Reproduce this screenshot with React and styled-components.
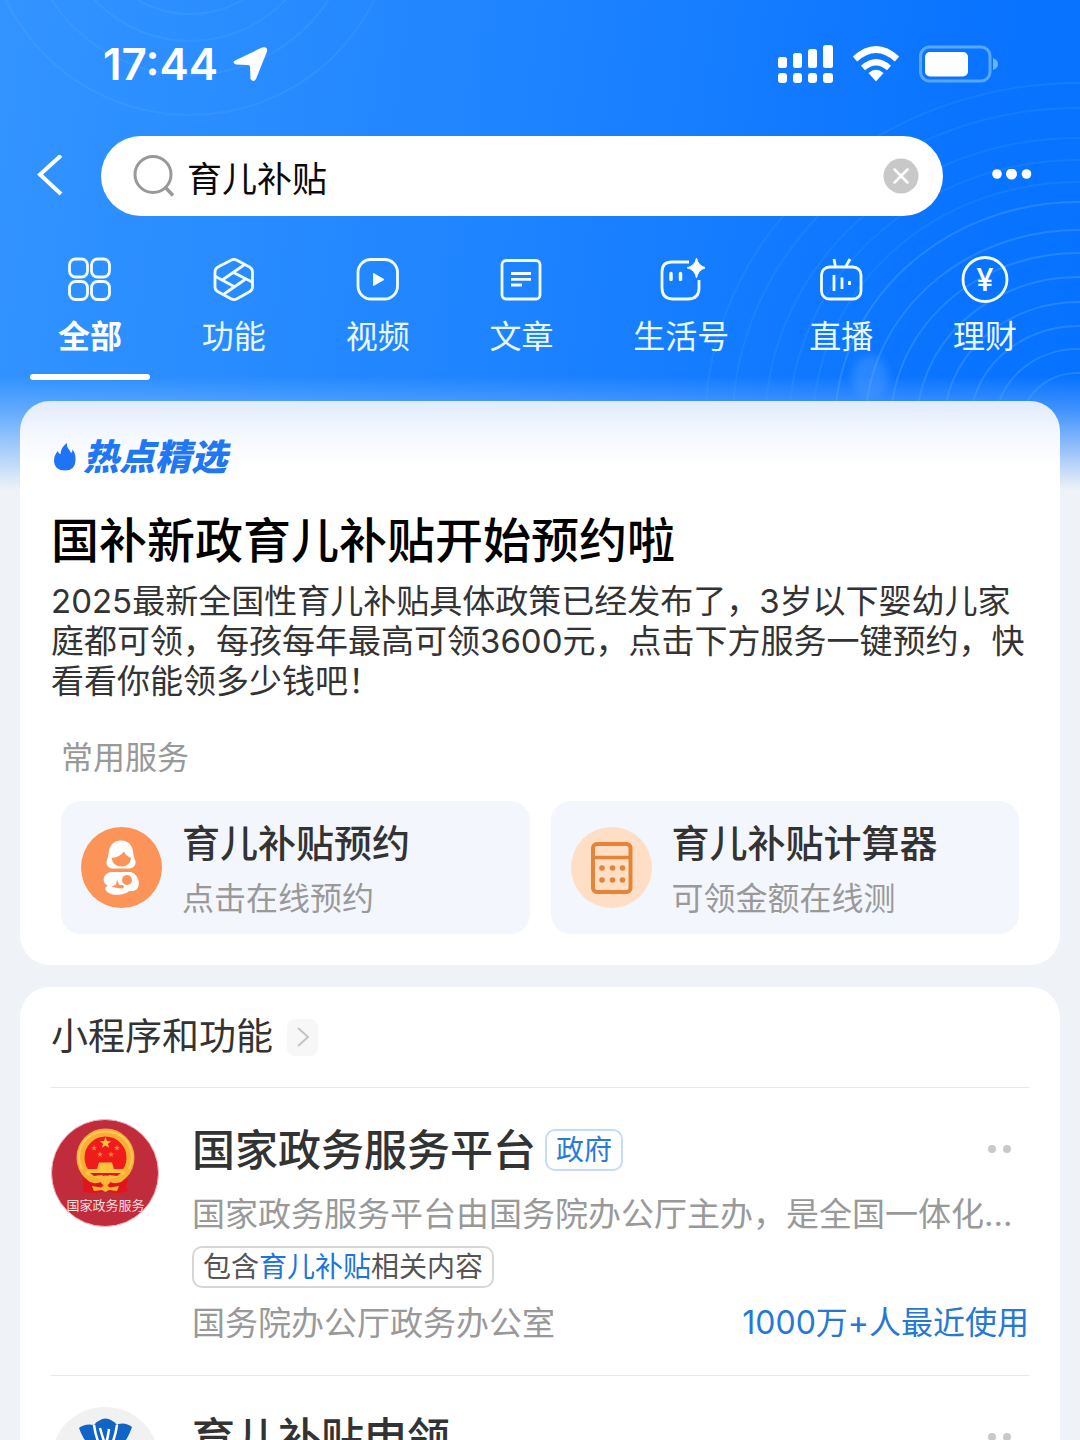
import React, { useState } from 'react';
import styled, { createGlobalStyle } from 'styled-components';

const RIPPLES_RIGHT = [52, 76, 99, 123, 148, 172, 195, 223, 243, 265, 287, 317, 342];
const RIPPLES_LEFT = [104, 131, 165, 205];

const TABS = [
  { id: 'all', label: '全部' },
  { id: 'feature', label: '功能' },
  { id: 'video', label: '视频' },
  { id: 'article', label: '文章' },
  { id: 'life', label: '生活号' },
  { id: 'live', label: '直播' },
  { id: 'finance', label: '理财' },
];

const tabIcons = {
  all: (
    <>
      <rect x="3.500" y="4" width="18" height="18" rx="6" />
      <rect x="25.500" y="4" width="18" height="18" rx="6" />
      <rect x="3.500" y="26.500" width="18" height="18" rx="6" />
      <rect x="25.500" y="26.500" width="18" height="18" rx="6" />
    </>
  ),
  feature: (
    <>
      <path d="M21 5.200Q24 3.500 27 5.200L39.500 12Q42.500 13.700 42.500 17V32Q42.500 35 39.500 36.800L27 43.800Q24 45.500 21 43.800L8 36.800Q5 35 5 32V17Q5 13.700 8 12Z" />
      <path d="M13 24.500L34 10M23.500 17.500L42 27M35 24.500L14 39M24 31.500L5.500 21.500" />
    </>
  ),
  video: (
    <>
      <rect x="4" y="4.500" width="39.500" height="39.500" rx="13" />
      <path d="M19.500 18.500L30 24.500L19.500 30.500Z" fill="#fff" strokeWidth="1" />
    </>
  ),
  article: (
    <>
      <rect x="5" y="5.500" width="38" height="38.500" rx="4" />
      <path d="M14 18.500H34M14 24.300H34M14 30H25" />
    </>
  ),
  life: (
    <>
      <path d="M32 7H15Q5 7 5 17V33Q5 44 16 44H31Q42 44 42 33V25" />
      <path d="M14 18.500V24.500M23.500 18.500V24.500" strokeLinecap="round" strokeWidth="3.500" />
      <path d="M39.500 3Q41 11 49 12.800Q41 14.500 39.500 23Q38 14.500 30 12.800Q38 11 39.500 3Z" fill="#fff" strokeWidth="1" />
    </>
  ),
  live: (
    <>
      <rect x="4.500" y="12" width="39.500" height="32" rx="8" />
      <path d="M17 4L18.500 12M33 4L28.500 12" />
      <path d="M17 20V36M25 22.500V34M32.500 26V30" />
    </>
  ),
  finance: (
    <>
      <circle cx="24" cy="24.500" r="22" />
      <text x="24" y="36" textAnchor="middle" fontSize="31" fontWeight="500" fill="#fff" stroke="none">¥</text>
    </>
  ),
};

const Backdrop = () => (
  <Ripples viewBox="0 0 1080 480" preserveAspectRatio="xMaxYMin slice" aria-hidden="true">
    <g fill="none" stroke="#7fc0ff">
      {RIPPLES_RIGHT.map((r) => (
        <ellipse key={r} cx="1078" cy="425" rx={r * 1.09} ry={r} strokeWidth="2" opacity={r < 225 ? 0.24 : 0.12} />
      ))}
      {RIPPLES_LEFT.map((r) => (
        <circle key={r} cx="190" cy="-90" r={r} strokeWidth="2" opacity="0.13" />
      ))}
    </g>
    <ellipse cx="870" cy="378" rx="18" ry="22" fill="#6fb0ff" opacity="0.3" filter="blur(4px)" />
  </Ripples>
);

const StatusIcons = () => (
  <svg width="222" height="40" viewBox="777 43 222 40" fill="#fff" aria-hidden="true">
    <rect x="778" y="56" width="9" height="11" rx="2.500" />
    <rect x="793" y="52" width="9" height="15" rx="2.500" />
    <rect x="808" y="48" width="9" height="19" rx="2.500" />
    <rect x="823" y="44" width="10" height="23" rx="2.500" />
    <rect x="778" y="72" width="9" height="10" rx="3" />
    <rect x="793" y="72" width="9" height="10" rx="3" />
    <rect x="808" y="72" width="9" height="10" rx="3" />
    <rect x="823" y="72" width="10" height="10" rx="3" />
    <path d="M855 58Q876 39 897 58" fill="none" stroke="#fff" strokeWidth="6.500" />
    <path d="M863 67Q876 55.500 889 67" fill="none" stroke="#fff" strokeWidth="6" />
    <path d="M868.500 72Q876 65.500 883.500 72L876 80.500Z" />
    <rect x="920.500" y="46" width="69.500" height="34" rx="9" fill="none" stroke="#58a8ff" strokeWidth="3" />
    <rect x="925" y="51" width="43" height="24.500" rx="5" />
    <path d="M993 57Q998 59 998 63Q998 67 993 69Z" fill="#69b4ff" />
  </svg>
);

const MotherIcon = () => (
  <svg width="81" height="81" viewBox="0 0 81 81" aria-hidden="true">
    <circle cx="40.500" cy="40.500" r="40.500" fill="#fc9359" />
    <path d="M40 13.500C49 13.500 52 20 52.500 28C53 32 55 33 54.500 36.500C54 40 50 42 46 41.500H34C29 42 26 40 25.500 36C25.500 33 27 31.500 27.500 27C28 19 32 13.500 40 13.500Z" fill="#fff" />
    <path d="M30.500 31Q39 30 43 24.500Q45 29 50 31Q49 39.500 40.500 39.500Q32 39.500 30.500 31Z" fill="#fc9359" />
    <path d="M30 45H50C56 47 59 54 57.500 59C56 64 52 64.500 48 64C44 68.500 31 69 27 65.500C23 63 24 59.500 27 58.500C20 56 22 46 30 45Z" fill="#fff" />
    <circle cx="46" cy="53" r="5" fill="#fc9359" />
    <path d="M30.500 59.500L35 57.500L36 53L38.500 58H42Q44 60 41.500 61.500Q36 61.500 30.500 59.500Z" fill="#fc9359" />
  </svg>
);

const CalculatorIcon = () => (
  <svg width="81" height="81" viewBox="0 0 81 81" aria-hidden="true">
    <circle cx="40.500" cy="40.500" r="40.500" fill="#fedec5" />
    <rect x="22" y="17" width="37.500" height="48" rx="4" fill="none" stroke="#e2853a" strokeWidth="4" />
    <path d="M22 30.500H59" stroke="#e2853a" strokeWidth="3.500" />
    <g fill="#e2853a">
      {[31, 41.5, 51.5].map((x) => (
        <React.Fragment key={x}>
          <circle cx={x} cy="41" r="2.800" />
          <circle cx={x} cy="53" r="2.800" />
        </React.Fragment>
      ))}
    </g>
  </svg>
);

const star = (cx, cy, r) => Array.from({ length: 10 }, (_, i) => {
  const a = -Math.PI / 2 + (i * Math.PI) / 5;
  const d = i % 2 ? r * 0.42 : r;
  return `${cx + d * Math.cos(a)},${cy + d * Math.sin(a)}`;
}).join(' ');

const GovLogo = () => (
  <svg width="108" height="108" viewBox="0 0 108 108" aria-hidden="true">
    <circle cx="54" cy="54" r="53.500" fill="#c12c3c" stroke="#f4b9c0" strokeWidth="1" />
    <path d="M34 56Q30 62 33 67L31 72Q42 76 54 72Q66 76 77 72L75 67Q79 62 74 56Z" fill="#e0141c" />
    <circle cx="54.500" cy="38.500" r="25" fill="#f01b1b" stroke="#fbae34" strokeWidth="8" />
    <path d="M31 50Q25 38 31 26Q38 13 54.500 12.500Q71 13 78 26Q84 38 78 50" fill="none" stroke="#fdc95a" strokeWidth="2" />
    <polygon points={star(54.5, 24, 6)} fill="#ffc23c" />
    <polygon points={star(43, 29, 3)} fill="#fb8a3c" />
    <polygon points={star(66, 29, 3)} fill="#fb8a3c" />
    <polygon points={star(49, 35.5, 3)} fill="#fb8a3c" />
    <polygon points={star(60, 35.5, 3)} fill="#fb8a3c" />
    <path d="M48 43.500H61L63 50H72L75 55Q65 60 54.500 60Q44 60 34 55L37 50H46Z" fill="#ffc23c" />
    <path d="M39 54H70L66 57L58 56L54.500 59L51 56L43 57Z" fill="#e0141c" />
    <path d="M34 61Q45 68 54.500 60Q64 68 75 61L72 67Q62 71 54.500 65Q47 71 37 67Z" fill="#e0141c" />
    <circle cx="54.500" cy="61.500" r="5" fill="#fdb83a" />
    <path d="M41 67L50 68.500L54.500 66L59 68.500L68 67L66 72L58 71L54.500 73L51 71L43 72Z" fill="#fdb42f" />
    <text x="54.500" y="91" textAnchor="middle" fontSize="13" fill="#fbdcdc">国家政务服务</text>
  </svg>
);

const LotusLogo = () => (
  <svg width="108" height="108" viewBox="0 0 108 108" aria-hidden="true">
    <circle cx="54" cy="54" r="54" fill="#f1f1f2" />
    <g fill="#1263c6">
      <path d="M43 18Q48 12 54.500 11.500Q61 12 66 18Q66 34 54.500 46Q43 34 43 18Z" />
      <path d="M28 21Q34 16 43 18L54.500 46Q36 44 28 21Z" />
      <path d="M81 20Q75 15 67 17L54.500 46Q73 44 81 20Z" />
      <path d="M24 44Q38 42 54.500 62Q71 42 85 44Q80 72 54.500 78Q29 72 24 44Z" />
    </g>
    <path d="M54.500 60V34M49 21Q52 32 54.500 38Q57 31 58 22M43 18Q45 34 54.500 50M66 18Q64 34 54.500 50" fill="none" stroke="#fff" strokeWidth="2.500" />
  </svg>
);

const SERVICES = [
  { title: '育儿补贴预约', note: '点击在线预约', Icon: MotherIcon },
  { title: '育儿补贴计算器', note: '可领金额在线测', Icon: CalculatorIcon },
];

const App = () => {
  const [query, setQuery] = useState('育儿补贴');
  const [tab, setTab] = useState('all');

  return (
    <Page>
      <GlobalStyle />
      <Backdrop />

      <StatusBar>
        <Clock>
          17:44
          <svg width="36" height="36" viewBox="0 0 36 36" aria-hidden="true">
            <path d="M3 14.500L30 1.500Q36 0 35 5.500L24 33Q21.500 37 18.500 33L18 21Q18 19 16 19L4 18.500Q-0.500 17 3 14.500Z" fill="#fff" />
          </svg>
        </Clock>
        <StatusIcons />
      </StatusBar>

      <SearchRow>
        <BarButton $width={26} type="button" aria-label="返回">
          <svg width="26" height="42" viewBox="0 0 26 42">
            <path d="M24 0.500L3 19.500L24 39" fill="none" stroke="#fff" strokeWidth="4" />
          </svg>
        </BarButton>
        <SearchBox>
          <svg width="42" height="42" viewBox="0 0 42 42" aria-hidden="true">
            <circle cx="20" cy="19.500" r="18" fill="none" stroke="#999" strokeWidth="3" />
            <path d="M32 32L40 40.500" stroke="#999" strokeWidth="3.500" />
          </svg>
          <input
            type="text"
            aria-label="搜索"
            value={query}
            onChange={(e) => setQuery(e.target.value)}
          />
          <BarButton $width={36} type="button" aria-label="清除" onClick={() => setQuery('')}>
            <svg width="36" height="36" viewBox="0 0 36 36">
              <circle cx="18" cy="18" r="17.500" fill="#c8c8c8" />
              <path d="M11.500 11.500L24.500 24.500M24.500 11.500L11.500 24.500" stroke="#fff" strokeWidth="2.500" strokeLinecap="round" />
            </svg>
          </BarButton>
        </SearchBox>
        <BarButton $width={40} type="button" aria-label="更多">
          <svg width="40" height="14" viewBox="0 0 40 14" fill="#fff">
            <circle cx="5" cy="5" r="4.800" />
            <circle cx="19.500" cy="5" r="5.500" />
            <circle cx="34.500" cy="5" r="4.800" />
          </svg>
        </BarButton>
      </SearchRow>

      <Tabs>
        {TABS.map(({ id, label }) => (
          <Tab key={id} type="button" $active={tab === id} onClick={() => setTab(id)}>
            <svg width="48" height="48" viewBox="0 0 48 48" fill="none" stroke="#f0fcff" strokeWidth="2.800" aria-hidden="true">
              {tabIcons[id]}
            </svg>
            <span>{label}</span>
          </Tab>
        ))}
      </Tabs>

      <HotCard>
        <HotTag>
          <svg width="24" height="30" viewBox="0 0 24 30" aria-hidden="true">
            <path d="M5 9Q5.500 12 7.500 12Q8 5 14 1Q13.500 5 16 7.500Q17.500 9.500 18 11Q19.500 10 19.500 7.500Q23 12 22.500 18.500Q22 28.500 12 28.500Q1.500 28.500 1 19Q1 13 5 9Z" fill="#1f74f5" />
          </svg>
          热点精选
        </HotTag>
        <HotTitle>国补新政育儿补贴开始预约啦</HotTitle>
        <HotText>
          2025最新全国性育儿补贴具体政策已经发布了，3岁以下婴幼儿家庭都可领，每孩每年最高可领3600元，点击下方服务一键预约，快看看你能领多少钱吧！
        </HotText>
        <SectionLabel>常用服务</SectionLabel>
        <Services>
          {SERVICES.map(({ title, note, Icon }) => (
            <Service key={title} href="#">
              <Icon />
              <div>
                <strong>{title}</strong>
                <span>{note}</span>
              </div>
            </Service>
          ))}
        </Services>
      </HotCard>

      <AppsCard>
        <AppsHeader>
          <h2>小程序和功能</h2>
          <MoreButton type="button" aria-label="查看更多">
            <svg width="12" height="20" viewBox="0 0 12 20">
              <path d="M1 1L11 10L1 19" fill="none" stroke="#c4c4c4" strokeWidth="2" />
            </svg>
          </MoreButton>
        </AppsHeader>

        <AppItem>
          <GovLogo />
          <AppBody>
            <AppName>
              <a href="#">国家政务服务平台</a>
              <Badge>政府</Badge>
              <ItemMenu />
            </AppName>
            <AppText>国家政务服务平台由国务院办公厅主办，是全国一体化…</AppText>
            <Match>
              包含
              <em>育儿补贴</em>
              相关内容
            </Match>
            <AppFooter>
              <span>国务院办公厅政务办公室</span>
              <b>1000万+人最近使用</b>
            </AppFooter>
          </AppBody>
        </AppItem>

        <AppItem>
          <LotusLogo />
          <AppBody>
            <AppName>
              <a href="#">育儿补贴申领</a>
              <ItemMenu />
            </AppName>
          </AppBody>
        </AppItem>
      </AppsCard>
    </Page>
  );
};

export default App;

function ItemMenu() {
  return (
    <DotsButton type="button" aria-label="更多操作">
      <svg width="26" height="10" viewBox="0 0 26 10" fill="#c9c9c9">
        <circle cx="5" cy="4" r="4" />
        <circle cx="20" cy="4" r="4" />
      </svg>
    </DotsButton>
  );
}

const GlobalStyle = createGlobalStyle`
  * {
    box-sizing: border-box;
  }

  html {
    scrollbar-width: none;
  }

  body {
    margin: 0;
    background: #eff2f6;
  }

  body, button, input {
    font-family: Inter, "Noto Sans CJK SC", sans-serif;
  }

  h1, h2, p {
    margin: 0;
  }

  svg {
    display: block;
    flex: none;
  }
`;

const Page = styled.div`
  position: relative;
  min-height: 100vh;
  overflow: hidden;
  background:
    linear-gradient(180deg, rgba(239, 242, 246, 0) 376px, rgba(239, 242, 246, 0.25) 410px, #eff2f6 490px),
    linear-gradient(98deg, #3394ff 0%, #1c82ff 45%, #0a74ff 75%, #0271ff 100%);
`;

const Ripples = styled.svg`
  position: absolute;
  top: 0;
  left: 0;
  width: 100%;
  height: 480px;
  mask-image: linear-gradient(180deg, #000 380px, transparent 450px);
`;

const StatusBar = styled.div`
  position: relative;
  display: flex;
  align-items: center;
  justify-content: space-between;
  height: 128px;
  padding: 0 81px 0 103px;
`;

const Clock = styled.div`
  display: flex;
  align-items: center;
  gap: 14px;
  color: #fff;
  font-size: 44px;
  font-weight: 600;
`;

const SearchRow = styled.div`
  position: relative;
  display: flex;
  align-items: center;
  margin-top: 8px;
  padding: 0 48px 0 37px;
`;

const BarButton = styled.button`
  display: flex;
  flex: none;
  width: ${({ $width }) => $width}px;
  padding: 0;
  border: none;
  background: none;
`;

const SearchBox = styled.div`
  display: flex;
  align-items: center;
  flex: 1;
  height: 80px;
  margin: 0 49px 0 38px;
  padding: 0 24px 0 32px;
  border-radius: 40px;
  background: #fff;

  input {
    flex: 1;
    min-width: 0;
    padding: 0 12px;
    border: none;
    outline: none;
    background: none;
    color: #0a0a0a;
    font-size: 35px;
  }
`;

const Tabs = styled.nav`
  position: relative;
  display: flex;
  justify-content: space-between;
  margin-top: 39px;
  padding: 0 35px 0 30px;
`;

const Tab = styled.button`
  display: flex;
  flex-direction: column;
  align-items: center;
  padding: 0;
  border: none;
  background: none;
  color: ${({ $active }) => ($active ? '#fff' : '#e8f8ff')};
  font-size: 32px;
  font-weight: ${({ $active }) => ($active ? 700 : 400)};
  line-height: 40px;

  span {
    margin-top: 14px;
    padding: 0 28px;
  }

  &::after {
    content: '';
    width: 100%;
    height: 6px;
    margin-top: 17px;
    border-radius: 3px;
    background: ${({ $active }) => ($active ? '#fff' : 'none')};
  }
`;

const Card = styled.section`
  position: relative;
  margin: 0 20px;
  padding: 0 31px;
  border-radius: 30px;
  background: #fff;
`;

const HotCard = styled(Card)`
  margin-top: 21px;
  padding-top: 36px;
  padding-bottom: 31px;
  background: linear-gradient(180deg, #e1ebfd 0, #f4f8ff 34px, #fff 66px);
`;

const HotTag = styled.div`
  display: flex;
  align-items: center;
  gap: 6px;
  padding-left: 2px;
  color: #2177f2;
  font-size: 36px;
  font-style: italic;
  font-weight: 900;
  line-height: 40px;
`;

const HotTitle = styled.h1`
  margin-top: 34px;
  color: #000;
  font-size: 48px;
  font-weight: 500;
  line-height: 60px;
`;

const HotText = styled.p`
  margin-top: 10px;
  color: #333;
  font-size: 33px;
  line-height: 40px;
`;

const SectionLabel = styled.h2`
  margin-top: 37px;
  padding-left: 10px;
  color: #999;
  font-size: 32px;
  font-weight: 400;
  line-height: 40px;
`;

const Services = styled.div`
  display: grid;
  grid-template-columns: 1fr 1fr;
  gap: 21px;
  margin-top: 23px;
  padding: 0 10px;
`;

const Service = styled.a`
  display: flex;
  align-items: center;
  gap: 20px;
  padding: 11px 20px;
  border-radius: 20px;
  background: #f4f6fe;
  text-decoration: none;

  strong, span {
    display: block;
    white-space: nowrap;
  }

  strong {
    color: #333;
    font-size: 38px;
    font-weight: 500;
    line-height: 62px;
  }

  span {
    color: #999;
    font-size: 32px;
    line-height: 49px;
  }
`;

const AppsCard = styled(Card)`
  margin-top: 22px;
`;

const AppsHeader = styled.div`
  display: flex;
  align-items: center;
  gap: 14px;
  padding: 25px 0;

  h2 {
    color: #333;
    font-size: 37px;
    font-weight: 400;
    line-height: 50px;
  }
`;

const MoreButton = styled.button`
  display: flex;
  align-items: center;
  justify-content: center;
  width: 31px;
  height: 37px;
  padding: 0;
  border: none;
  border-radius: 8px;
  background: #f7f7f7;
`;

const AppItem = styled.article`
  display: flex;
  gap: 33px;
  padding: 31px 0 32px;
  border-top: 1px solid #e9e9e9;
`;

const AppBody = styled.div`
  flex: 1;
  min-width: 0;
  padding-top: 3px;
`;

const AppName = styled.div`
  display: flex;
  align-items: center;

  a {
    color: #333;
    font-size: 43px;
    font-weight: 500;
    line-height: 56px;
    text-decoration: none;
  }
`;

const Badge = styled.span`
  margin-left: 9px;
  padding: 0 9px;
  border: 2px solid #c5dcf7;
  border-radius: 10px;
  color: #2a7bd6;
  font-size: 28px;
  line-height: 38px;
`;

const DotsButton = styled.button`
  margin-left: auto;
  padding: 0 16px 0 0;
  border: none;
  background: none;
`;

const AppText = styled.p`
  margin-top: 16px;
  overflow: hidden;
  color: #999;
  font-size: 33px;
  line-height: 40px;
  text-overflow: ellipsis;
  white-space: nowrap;
`;

const Match = styled.div`
  width: fit-content;
  margin-top: 12px;
  padding: 0 9px;
  border: 2px solid #d6d6d6;
  border-radius: 10px;
  color: #555;
  font-size: 28px;
  line-height: 38px;

  em {
    color: #1f74dc;
    font-style: normal;
  }
`;

const AppFooter = styled.div`
  display: flex;
  justify-content: space-between;
  margin-top: 15px;
  color: #999;
  font-size: 33px;
  line-height: 40px;

  b {
    color: #2678d4;
    font-size: 32px;
    font-weight: 400;
  }
`;
